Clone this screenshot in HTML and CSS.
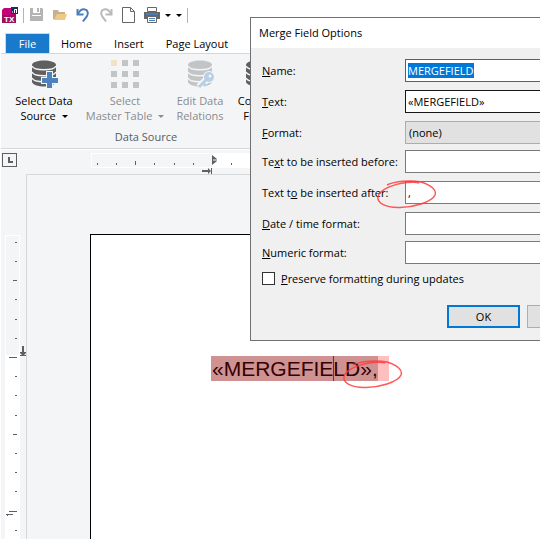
FILE: index.html
```
<!DOCTYPE html>
<html lang="en">
<head>
    <meta charset="UTF-8">
    <meta name="viewport" content="width=device-width, initial-scale=1.0">
    <title>Merge Field Options</title>
    <link rel="stylesheet" href="styles.css">
</head>
<body>
    <div class="app">
        <header class="quick-access">
            <svg class="icon" viewBox="0 0 16 16" aria-hidden="true">
                <path d="M0 3l2-2h8v6h4v9H0z" fill="#c4007a"/>
                <path d="M0 8h14v8H0z" fill="#9c0f5c"/>
                <path d="M9 0h7v7H9z" fill="#14305c"/>
                <path d="M10.500 5.500v-1M12.500 6V2.500M12.500 2.500h2M14.500 2v4" fill="none" stroke="#fff"/>
                <text class="logo-text" x="2" y="15">TX</text>
            </svg>
            <span class="separator"></span>
            <button class="tool" aria-label="Save">
                <svg class="icon" viewBox="0 0 16 16">
                    <path d="M1 1h12l1 1v12H1z" fill="#b4b4b4"/>
                    <path d="M4 1h7v5H4zM3 8h9v4H3z" fill="#fff"/>
                    <path d="M8 1h2v4H8zM3 9h9v3H3z" fill="#b4b4b4"/>
                </svg>
            </button>
            <button class="tool" aria-label="Open">
                <svg class="icon" viewBox="0 0 16 16">
                    <path d="M1 3h5l1 2h6v3H5l-2 5-2-1z" fill="#c4b190"/>
                    <path d="M5 7h10l-2 6H2z" fill="#f0c987"/>
                </svg>
            </button>
            <button class="tool" aria-label="Undo">
                <svg class="icon" viewBox="0 0 16 16">
                    <path d="M2.500 2v5.500h6" fill="none" stroke="#4a7ebb" stroke-width="2"/>
                    <path d="M3 7C5 3 8 2 10 2.500C13 3 13.500 7 12 9C11 11 9.500 12 8 14.500" fill="none" stroke="#4a7ebb" stroke-width="2"/>
                </svg>
            </button>
            <button class="tool" aria-label="Redo">
                <svg class="icon" viewBox="0 0 16 16">
                    <path d="M13.500 2v5.500h-6" fill="none" stroke="#b9b9b9" stroke-width="2"/>
                    <path d="M13 7C11 3 8 2 6 2.500C3 3 2.500 7 4 9C5 11 6.500 12 8 14.500" fill="none" stroke="#b9b9b9" stroke-width="2"/>
                </svg>
            </button>
            <button class="tool" aria-label="New">
                <svg class="icon" viewBox="0 0 16 16">
                    <path d="M1.500 .5h8l4 4v11h-12z" fill="#fff" stroke="#666"/>
                    <path d="M9.500 .5v4h4" fill="none" stroke="#666"/>
                </svg>
            </button>
            <button class="tool" aria-label="Print">
                <svg class="icon" viewBox="0 0 16 16">
                    <path d="M0 5h16v7H0z" fill="#666"/>
                    <path d="M3.500 .5h9v4h-9z" fill="#fff" stroke="#666"/>
                    <path d="M2 6h12v2H2z" fill="#4a7ebb"/>
                    <path d="M3.500 9.500h9v6h-9z" fill="#fff" stroke="#666"/>
                    <path d="M5 11.500h6M5 13.500h6" stroke="#4a7ebb"/>
                </svg>
            </button>
            <button class="arrow" aria-label="Print options"></button>
            <button class="arrow" aria-label="Customize toolbar"></button>
            <span class="separator"></span>
        </header>

        <nav class="tabs">
            <button class="tab tab-file">File</button>
            <button class="tab">Home</button>
            <button class="tab">Insert</button>
            <button class="tab">Page Layout</button>
            <button class="tab">View</button>
        </nav>

        <section class="ribbon">
            <div class="ribbon-group">
                <button class="command command-source">
                    <svg class="command-icon" viewBox="0 0 28 28">
                        <path d="M2 5C2-1 26-1 26 5v17c-2 6-22 6-24 0z" fill="#5f5f5f"/>
                        <path d="M2 6c2 5 22 5 24 0M2 12c2 5 22 5 24 0M2 18c2 5 22 5 24 0" fill="none" stroke="#f4f5f7" stroke-width="1.500"/>
                        <path d="M16 11h7v6h6v7h-6v5h-7v-5h-5v-7h5z" fill="#f4f5f7"/>
                        <path d="M17 12h5v6h6v5h-6v5h-5v-5h-5v-5h5z" fill="#4f81bd"/>
                    </svg>
                    <span>Select Data</span>
                    <span>Source <i class="arrow-glyph"></i></span>
                </button>
                <button class="command command-table" disabled>
                    <svg class="command-icon" viewBox="0 0 28 28">
                        <path d="M0 0h6v6H0z" fill="#f2e3c4"/>
                        <path d="M11 0h6v6h-6zM22 0h6v6h-6zM0 11h6v6H0zM11 11h6v6h-6zM22 11h6v6h-6zM0 22h6v6H0zM11 22h6v6h-6zM22 22h6v6h-6z" fill="#c3c4c5"/>
                    </svg>
                    <span>Select</span>
                    <span>Master Table <i class="arrow-glyph"></i></span>
                </button>
                <button class="command command-relations" disabled>
                    <svg class="command-icon" viewBox="0 0 28 28">
                        <path d="M2 5C2-1 26-1 26 5v17c-2 6-22 6-24 0z" fill="#c3c4c5"/>
                        <path d="M2 6c2 5 22 5 24 0M2 12c2 5 22 5 24 0M2 18c2 5 22 5 24 0" fill="none" stroke="#f4f5f7" stroke-width="1.500"/>
                        <path d="M22 18l-9 9" stroke="#f4f5f7" stroke-width="7"/>
                        <circle cx="23" cy="17" r="6" fill="#f4f5f7"/>
                        <path d="M21 19l-8 8M17 23l3 3" stroke="#b8cfe5" stroke-width="3"/>
                        <circle cx="23" cy="17" r="5" fill="#b8cfe5"/>
                        <circle cx="24" cy="16" r="1.500" fill="#f4f5f7"/>
                    </svg>
                    <span>Edit Data</span>
                    <span>Relations</span>
                </button>
                <button class="command command-convert">
                    <svg class="command-icon" viewBox="0 0 28 28">
                        <path d="M2 5C2-1 26-1 26 5v17c-2 6-22 6-24 0z" fill="#5f5f5f"/>
                        <path d="M2 6c2 5 22 5 24 0M2 12c2 5 22 5 24 0M2 18c2 5 22 5 24 0" fill="none" stroke="#f4f5f7" stroke-width="1.500"/>
                    </svg>
                    <span>Convert</span>
                    <span>Fields</span>
                </button>
            </div>
            <div class="group-title">Data Source</div>
        </section>

        <main class="workspace">
            <div class="corner">
                <button class="tab-stop" aria-label="Tab stop">
                    <svg class="tab-stop-icon" viewBox="0 0 7 7"><path d="M2 0h2v4h3v2H2z" fill="#5f5f5f"/></svg>
                </button>
            </div>
            <svg class="ruler-h" aria-hidden="true">
                <rect x="65" y="3" width="1000" height="15" fill="#fff"/>
                <rect x="66" y="4" width="120" height="13" fill="#f4f5f7"/>
                <path d="M71.500 13v2M90.500 13v2M109.500 11v4M128.500 13v2M148.500 13v2M167.500 13v2M205.500 13v2" stroke="#5f5f5f"/>
                <path d="M186 5l5 4v2l-5 4z" fill="#5f5f5f"/>
                <path d="M187 10h4" stroke="#fff"/>
                <path d="M176 21h7" stroke="#5f5f5f" stroke-width="2"/>
                <path d="M182 18l3 3l-3 3zM185 18h1v6h-1z" fill="#5f5f5f"/>
            </svg>
            <svg class="ruler-v" aria-hidden="true">
                <rect x="4" y="61" width="15" height="1000" fill="#fff"/>
                <rect x="5" y="62" width="13" height="119" fill="#f4f5f7"/>
                <path d="M14 68.500h2M14 87.500h2M12 106.500h4M14 125.500h2M14 145.500h2M14 164.500h2M8 183.500h8M14 202.500h2M14 221.500h2M14 241.500h2M12 260.500h4M14 279.500h2M14 298.500h2M14 317.500h2M8 337.500h8M14 356.500h2" stroke="#5f5f5f"/>
                <path d="M5 340.500h7M6 341.500h1" stroke="#6b5f68"/>
                <path d="M22 172v7M19 181.500h6" stroke="#5f5f5f"/>
                <path d="M21 172h2v6h2v1l-2 2h-2l-2-2v-1h2z" fill="#5f5f5f"/>
            </svg>
            <div class="view">
                <article class="page">
                    <p class="field"><span class="field-text">«MERGEFIE<span class="caret"></span>LD»,</span></p>
                </article>
            </div>
        </main>
    </div>

    <form class="dialog" role="dialog" aria-labelledby="dialogTitle">
        <h1 class="dialog-title" id="dialogTitle">Merge Field Options</h1>
        <div class="dialog-body">
            <div class="row-group">
                <div class="row">
                    <label for="name"><u>N</u>ame:</label>
                    <input class="box" type="text" id="name" value="MERGEFIELD" autofocus>
                </div>
                <div class="row">
                    <label for="text"><u>T</u>ext:</label>
                    <input class="box box-dark" type="text" id="text" value="«MERGEFIELD»">
                </div>
                <div class="row">
                    <label for="format"><u>F</u>ormat:</label>
                    <select class="box box-select" id="format">
                        <option>(none)</option>
                    </select>
                </div>
            </div>
            <div class="row-group">
                <div class="row">
                    <label for="before">Te<u>x</u>t to be inserted before:</label>
                    <input class="box" type="text" id="before">
                </div>
                <div class="row">
                    <label for="after">Text t<u>o</u> be inserted after:</label>
                    <input class="box" type="text" id="after" value=",">
                </div>
                <div class="row">
                    <label for="date"><u>D</u>ate / time format:</label>
                    <input class="box" type="text" id="date">
                </div>
            </div>
            <div class="row-group">
                <div class="row">
                    <label for="numeric"><u>N</u>umeric format:</label>
                    <input class="box" type="text" id="numeric">
                </div>
            </div>
            <div class="check-row">
                <input class="check" type="checkbox" id="preserve">
                <label for="preserve"><u>P</u>reserve formatting during updates</label>
            </div>
            <div class="buttons">
                <button class="button button-default" type="button">OK</button>
                <button class="button" type="button">Cancel</button>
            </div>
        </div>
    </form>

    <!-- red pen marks around the two commas -->
    <svg class="mark mark-dialog" viewBox="0 0 60 32" aria-hidden="true">
        <path d="M10 7C18 3 34 2 44 4C54 7 60 12 58 17C55 24 36 30 21 29.500C8 29 0 25 1 19C2 12 16 6 30 4.500C38 4 41 4.500 42 5"/>
    </svg>
    <svg class="mark mark-page" viewBox="0 0 60 32" aria-hidden="true">
        <path d="M10 7C18 3 34 2 44 4C54 7 60 12 58 17C55 24 36 30 21 29.500C8 29 0 25 1 19C2 12 16 6 30 4.500C38 4 41 4.500 42 5"/>
    </svg>

    <script>
        const nameInput = document.getElementById('name');
        nameInput.focus();
        nameInput.select();
    </script>
</body>
</html>
```
FILE: styles.css
```
* {
    box-sizing: border-box;
}

body {
    margin: 0;
    height: 100vh;
    overflow: hidden;
    position: relative;
    background-color: white;
    color: black;
    font: 11px/15px "Open Sans", "Noto Sans", sans-serif;
}

button, input, select {
    font: inherit;
    color: inherit;
    margin: 0;
}

button {
    padding: 0;
    border: none;
    background: none;
}

svg {
    display: block;
}

.app {
    height: 100%;
    display: flex;
    flex-direction: column;
    padding-left: 1px;
}

/* quick access toolbar */
.quick-access {
    display: flex;
    align-items: center;
    gap: 7px;
    height: 33px;
    padding: 0 0 3px 1px;
}

.icon {
    width: 16px;
    height: 16px;
}

.logo-text {
    font: bold 8px "Liberation Sans", sans-serif;
    fill: white;
}

.separator {
    width: 1px;
    height: 15px;
    margin: 0 -2px;
    background-color: #b4b4b4;
}

.arrow, .arrow-glyph {
    display: inline-block;
    border: solid transparent;
    border-width: 3px 3px 0;
    border-top-color: black;
}

.quick-access .arrow {
    margin-left: -2px;
}

.arrow-glyph {
    margin-left: 3px;
    vertical-align: 2px;
    border-top-color: currentColor;
}

/* tabs */
.tabs {
    display: flex;
    height: 20px;
    padding-left: 4px;
}

.tab {
    padding: 0 11px;
}

.tab-file {
    width: 45px;
    border: 1px solid #d5d7d9;
    border-bottom: none;
    background-color: #1979ca;
    color: white;
}

/* ribbon */
.ribbon {
    height: 96px;
    padding-top: 6px;
    border-top: 1px solid #d5d7d9;
    border-bottom: 1px solid #d5d7d9;
    background-color: #f4f5f7;
}

.ribbon-group {
    display: flex;
    padding-left: 8px;
}

.command {
    display: flex;
    flex: none;
    flex-direction: column;
    align-items: center;
    white-space: nowrap;
}

.command:disabled {
    color: #8a8b8c;
}

.command-icon {
    width: 28px;
    height: 28px;
    margin-bottom: 5px;
    overflow: visible;
}

.command-source {
    width: 70px;
}

.command-table {
    width: 92px;
}

.command-relations {
    width: 58px;
}

.command-convert {
    width: 58px;
}

.group-title {
    width: 290px;
    margin-top: 6px;
    color: #5a5b5c;
    text-align: center;
}

/* rulers and document */
.workspace {
    flex: 1;
    min-height: 0;
    display: grid;
    grid-template: 24px 1fr / 25px 1fr;
    margin-top: 1px;
    background-color: #f4f5f7;
}

.corner {
    padding: 3px 0 0 1px;
}

.tab-stop {
    display: flex;
    align-items: center;
    justify-content: center;
    width: 15px;
    height: 14px;
    border: 1px solid #5f5f5f;
}

.tab-stop-icon {
    width: 7px;
    height: 7px;
}

.ruler-h, .ruler-v {
    width: 100%;
    height: 100%;
}

.view {
    min-height: 0;
    padding: 59px 0 0 63px;
    border: solid #d5d7d9;
    border-width: 1px 0 0 1px;
}

.page {
    height: 100%;
    padding: 121px 0 0 120px;
    border: solid black;
    border-width: 1px 0 0 1px;
    background-color: white;
}

.field {
    display: inline-block;
    margin: 0;
    padding-right: 11px;
    background-color: #ffbfbf;
    color: #330000;
    font: 21px/25px "Liberation Sans", Arial, sans-serif;
}

.field-text {
    display: inline-block;
    padding-left: 1px;
    background-color: #cf9292;
}

.caret {
    display: inline-block;
    width: 1px;
    height: 25px;
    margin-right: -1px;
    vertical-align: top;
    background-color: #006060;
}

/* dialog */
.dialog {
    position: absolute;
    top: 17px;
    left: 250px;
    right: -72px;
    border: 1px solid #707070;
    background-color: #f0f0f0;
}

.dialog-title {
    margin: 0;
    padding: 0 8px;
    background-color: white;
    font-size: 11px;
    font-weight: normal;
    line-height: 30px;
}

.dialog-body {
    padding: 11px 11px 12px;
}

.row-group {
    display: grid;
    gap: 8px;
    margin-bottom: 6px;
}

.row {
    display: grid;
    grid-template-columns: 143px 1fr;
    align-items: center;
}

.box {
    width: 100%;
    height: 23px;
    padding: 0 2px 1px;
    border: 1px solid #7a7a7a;
    border-radius: 0;
    background-color: white;
    outline: none;
}

.box:focus {
    border-color: #0078d7;
}

.box::selection {
    background-color: #0078d7;
    color: white;
}

.box-dark {
    border-color: #171717;
}

.box-select {
    appearance: none;
    padding-left: 3px;
    border-color: #adadad;
    background-color: #e1e1e1;
}

.check-row {
    display: flex;
    align-items: center;
    gap: 6px;
    padding-top: 1px;
}

.check {
    appearance: none;
    width: 13px;
    height: 13px;
    border: 1px solid #333;
    background-color: white;
}

.check:checked {
    background-color: #0078d7;
}

.buttons {
    display: flex;
    justify-content: flex-end;
    gap: 7px;
    margin-top: 19px;
}

.button {
    width: 73px;
    height: 23px;
    border: 1px solid #adadad;
    background-color: #e1e1e1;
}

.button-default {
    border: 2px solid #0078d7;
}

/* pen marks */
.mark {
    position: absolute;
    width: 60px;
    height: 32px;
    fill: none;
    stroke: #ff3b3b;
    stroke-width: 1.5;
    stroke-opacity: 0.85;
    pointer-events: none;
}

.mark-dialog {
    top: 178px;
    left: 377px;
}

.mark-page {
    top: 358px;
    left: 343px;
}
```
